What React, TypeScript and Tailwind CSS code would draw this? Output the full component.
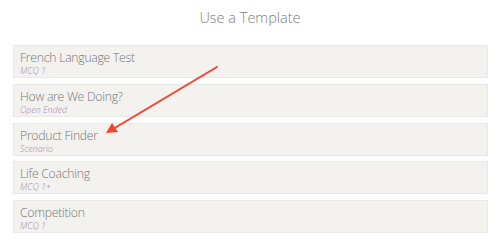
const templates = [
  { name: "French Language Test", type: "MCQ 1" },
  { name: "How are We Doing?", type: "Open Ended" },
  { name: "Product Finder", type: "Scenario" },
  { name: "Life Coaching", type: "MCQ 1+" },
  { name: "Competition", type: "MCQ 1" },
];

const App = () => {
  return (
    <div
      className="relative w-[500px] h-[245px] bg-white"
      style={{ fontFamily: '"Open Sans", "Liberation Sans", sans-serif' }}
    >
      <h1 className="h-[36px] flex items-center justify-center text-[14.5px] font-light text-[#808080]">
        Use a Template
      </h1>
      <div className="flex flex-col gap-[5.75px] mt-[9px] ml-[13px] mr-[12px]">
        {templates.map((t) => (
          <div
            key={t.name}
            className="h-[33px] bg-[#f3f2ee] border border-[#eae8e3] pl-[6px] pt-[3px]"
          >
            <div className="text-[12.2px] leading-[17px] font-light text-[#777777] tracking-[-0.25px]">{t.name}</div>
            <div className="text-[8.8px] leading-[10px] font-light italic text-[#a988b4]">{t.type}</div>
          </div>
        ))}
      </div>
      {/* seta vermelha */}
      <svg className="absolute left-0 top-0 pointer-events-none" width="500" height="245">
        <line x1="217" y1="67" x2="113" y2="129" stroke="#f5412d" strokeWidth="2" strokeLinecap="round" />
        <polygon points="106,133 112,123 118,132" fill="#f5412d" />
      </svg>
    </div>
  );
};

export default App;
